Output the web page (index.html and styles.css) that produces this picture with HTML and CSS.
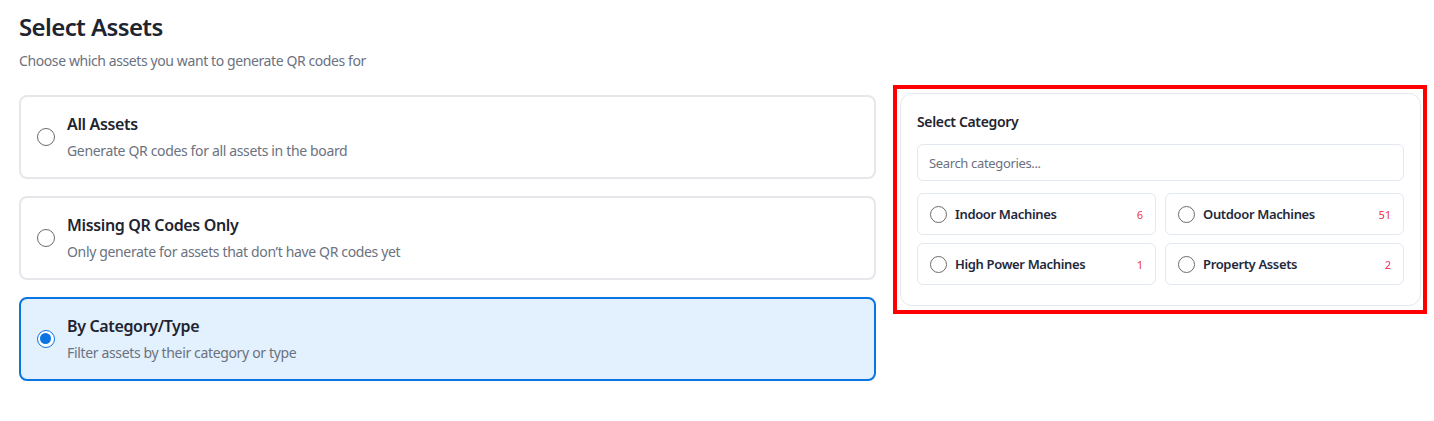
FILE: index.html
```html
<!DOCTYPE html>
<html lang="en">
<head>
<meta charset="utf-8">
<title>Select Assets</title>
<link rel="stylesheet" href="styles.css">
</head>
<body>
<div class="page">
  <h1 class="title">Select Assets</h1>
  <p class="subtitle">Choose which assets you want to generate QR codes for</p>
  <div class="layout">
    <div class="options">
      <label class="option">
        <span class="radio"></span>
        <span class="option-text">
          <span class="option-title">All Assets</span>
          <span class="option-desc">Generate QR codes for all assets in the board</span>
        </span>
      </label>
      <label class="option">
        <span class="radio"></span>
        <span class="option-text">
          <span class="option-title">Missing QR Codes Only</span>
          <span class="option-desc">Only generate for assets that don’t have QR codes yet</span>
        </span>
      </label>
      <label class="option option-selected">
        <span class="radio radio-checked"></span>
        <span class="option-text">
          <span class="option-title">By Category/Type</span>
          <span class="option-desc">Filter assets by their category or type</span>
        </span>
      </label>
    </div>
    <div class="highlight">
      <div class="panel">
        <div class="panel-title">Select Category</div>
        <div class="search">Search categories...</div>
        <div class="cat-grid">
          <div class="cat"><span class="cat-radio"></span><span class="cat-name">Indoor Machines</span><span class="count">6</span></div>
          <div class="cat"><span class="cat-radio"></span><span class="cat-name">Outdoor Machines</span><span class="count">51</span></div>
          <div class="cat"><span class="cat-radio"></span><span class="cat-name">High Power Machines</span><span class="count">1</span></div>
          <div class="cat"><span class="cat-radio"></span><span class="cat-name">Property Assets</span><span class="count">2</span></div>
        </div>
      </div>
    </div>
  </div>
</div>
</body>
</html>
```
FILE: styles.css
```css
* { box-sizing: border-box; }
html, body { margin: 0; padding: 0; background: #fff; }
body {
  font-family: "Noto Sans", "Open Sans", sans-serif;
  color: #1f2937;
  letter-spacing: -0.35px;
}
.page { padding: 12px 0 0 19px; }
.title {
  margin: 0;
  font-size: 24px;
  line-height: 30px;
  font-weight: 600;
  color: #1e2430;
  letter-spacing: -0.6px;
}
.subtitle {
  margin: 9px 0 0 0;
  font-size: 14px;
  line-height: 20px;
  color: #6b7280;
  letter-spacing: -0.4px;
}
.layout {
  display: flex;
  align-items: flex-start;
  margin-top: 24px;
  gap: 17px;
}
.options {
  flex: none;
  width: 857px;
  display: flex;
  flex-direction: column;
  gap: 17px;
}
.option {
  display: flex;
  align-items: center;
  gap: 12px;
  height: 84px;
  padding: 0 16px 0 16px;
  border: 2px solid #e5e7eb;
  border-radius: 8px;
  background: #fff;
}
.option-selected {
  background: #e3f0fd;
  border-color: #0a74e3;
}
.radio {
  width: 18px;
  height: 18px;
  border-radius: 50%;
  border: 1.5px solid #6b6b6b;
  background: #fff;
  flex: none;
}
.radio-checked {
  border: 1.5px solid #0a74e3;
  position: relative;
}
.radio-checked::after {
  content: "";
  position: absolute;
  left: 2px; top: 2px;
  width: 11px; height: 11px;
  border-radius: 50%;
  background: #0a74e3;
}
.option-text { display: flex; flex-direction: column; gap: 6px; }
.option-title {
  font-size: 16px;
  line-height: 22px;
  font-weight: 600;
  color: #1e2430;
}
.option-desc {
  font-size: 14px;
  line-height: 20px;
  color: #6b7280;
}
.highlight {
  flex: none;
  margin-top: -10px;
  width: 534px;
  border: 4px solid #ff0000;
  padding: 4px 2px 4px 3px;
}
.panel {
  border: 1px solid #e5e7eb;
  border-radius: 12px;
  padding: 16px 16px 20px 16px;
}
.panel-title {
  font-size: 14px;
  line-height: 20px;
  font-weight: 600;
  color: #1e2430;
  margin-top: 2px;
}
.search {
  margin-top: 12px;
  height: 37px;
  border: 1px solid #e2e8f0;
  border-radius: 6px;
  padding: 0 11px;
  display: flex;
  align-items: center;
  font-size: 13px;
  color: #6b7280;
}
.cat-grid {
  margin-top: 12px;
  display: grid;
  grid-template-columns: 1fr 1fr;
  gap: 8px 9px;
}
.cat {
  display: flex;
  align-items: center;
  height: 42px;
  border: 1px solid #e2e8f0;
  border-radius: 6px;
  padding: 0 12px 0 12px;
}
.cat-radio {
  width: 17px;
  height: 17px;
  border-radius: 50%;
  border: 1.5px solid #6b6b6b;
  flex: none;
  margin-right: 8px;
}
.cat-name {
  flex: 1;
  font-size: 13px;
  font-weight: 600;
  color: #1e293b;
}
.count {
  font-size: 11px;
  font-weight: 500;
  letter-spacing: 0;
  background: linear-gradient(90deg, #f43f3f, #ec4899);
  -webkit-background-clip: text;
  background-clip: text;
  color: transparent;
  -webkit-text-fill-color: transparent;
}
```
